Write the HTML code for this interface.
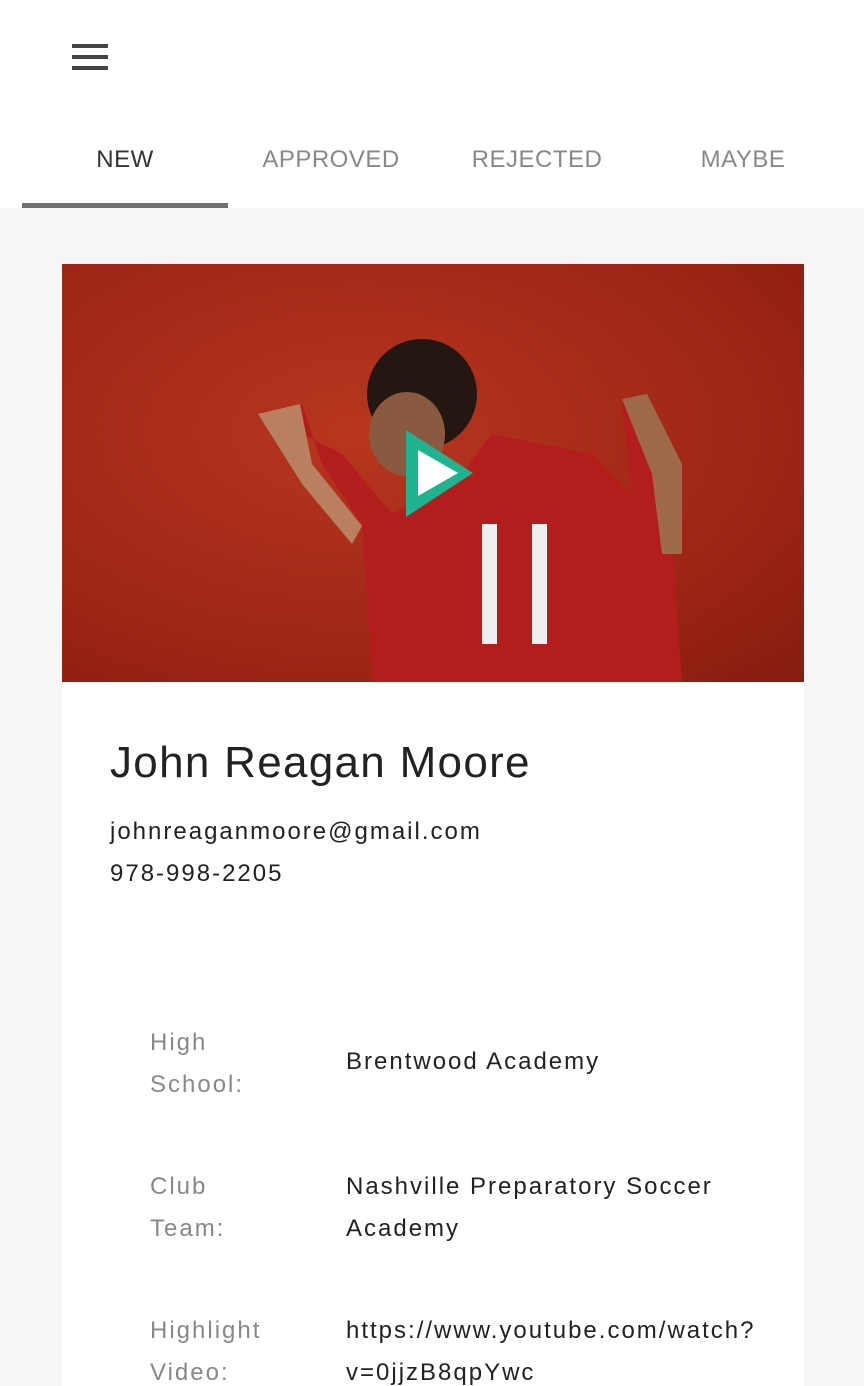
<!DOCTYPE html>
<html><head><meta charset="utf-8"><style>
*{margin:0;padding:0;box-sizing:border-box}
html,body{width:864px;height:1386px;overflow:hidden}
body{background:#f6f5f8;font-family:"Liberation Sans",sans-serif;position:relative}
.hdr{position:absolute;left:0;top:0;width:864px;height:208px;background:#fff}
.bar{position:absolute;left:72px;width:36px;height:4px;background:#444}
.tab{position:absolute;top:146px;font-size:24px;color:#888;letter-spacing:0.5px;text-align:center;width:206px}
.ind{position:absolute;left:22px;top:203px;width:206px;height:5px;background:#707070}
.card{position:absolute;left:62px;top:264px;width:742px;height:1122px;background:#fff}
.img{position:absolute;left:0;top:0;width:742px;height:418px;background:radial-gradient(ellipse at 40% 40%,#b8361f,#9a2414 70%,#861c10)}
.name{position:absolute;left:48px;top:474px;font-size:44px;color:#222;letter-spacing:1.3px}
.c{position:absolute;left:48px;font-size:24px;color:#222;letter-spacing:2px}
.l{position:absolute;left:88px;font-size:24px;color:#888;line-height:42px;letter-spacing:2px}
.v{position:absolute;left:284px;font-size:24px;color:#222;line-height:42px;letter-spacing:2px;white-space:nowrap}
</style></head><body>
<div class="hdr">
<div class="bar" style="top:44px"></div><div class="bar" style="top:55px"></div><div class="bar" style="top:66px"></div>
<div class="tab" style="left:22px;color:#333">NEW</div>
<div class="tab" style="left:228px">APPROVED</div>
<div class="tab" style="left:434px">REJECTED</div>
<div class="tab" style="left:640px">MAYBE</div>
<div class="ind"></div>
</div>
<div class="card">
<div class="img">
<svg width="742" height="418" viewBox="0 0 742 418">
<path d="M200 150 L240 140 L260 200 L300 260 L310 418 L620 418 L610 280 L620 200 L590 140 L560 140 L570 230 L530 190 L430 170 L400 210 L330 250 L280 190 Z" fill="#b31d1d"/>
<path d="M196 150 L238 140 L250 200 L300 262 L290 280 L240 220 Z" fill="#b88060"/>
<path d="M560 135 L585 130 L620 200 L620 290 L600 290 L590 210 Z" fill="#a06a4a"/>
<circle cx="360" cy="130" r="55" fill="#241610"/>
<ellipse cx="345" cy="170" rx="38" ry="42" fill="#8a5a40"/>
<rect x="420" y="260" width="15" height="120" fill="#eee"/><rect x="470" y="260" width="15" height="120" fill="#eee"/>
<polygon points="344,166 411,209 344,253" fill="#1fb38f"/>
<polygon points="356,186 396,209 356,232" fill="#fff"/>
</svg>
</div>
<div class="name">John Reagan Moore</div>
<div class="c" style="top:554px">johnreaganmoore@gmail.com</div>
<div class="c" style="top:596px">978-998-2205</div>
<div class="l" style="top:758px">High<br>School:</div>
<div class="v" style="top:777px">Brentwood Academy</div>
<div class="l" style="top:902px">Club<br>Team:</div>
<div class="v" style="top:902px">Nashville Preparatory Soccer<br>Academy</div>
<div class="l" style="top:1046px">Highlight<br>Video:</div>
<div class="v" style="top:1046px">https://www.youtube.com/watch?<br>v=0jjzB8qpYwc</div>
</div>
</body></html>
